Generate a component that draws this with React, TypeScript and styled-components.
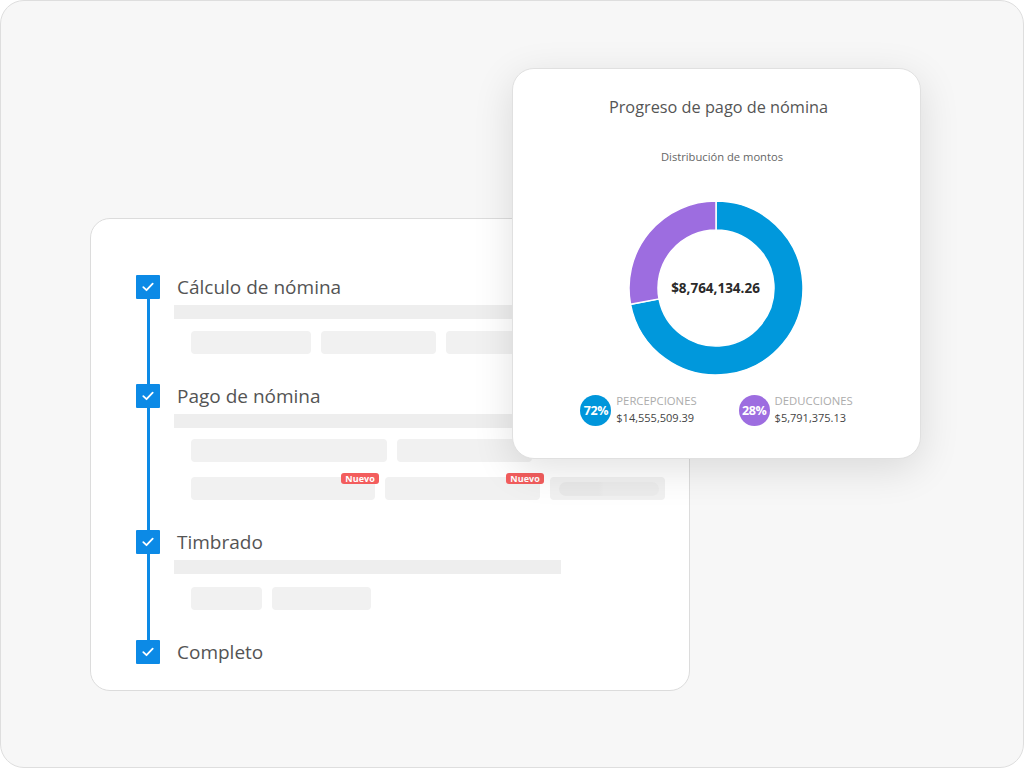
import React from "react";
import styled, { createGlobalStyle } from "styled-components";

const Global = createGlobalStyle`
  html, body { margin: 0; padding: 0; background: #ffffff; }
  body { font-family: "Open Sans", "Noto Sans", sans-serif; }
  * { box-sizing: border-box; }
`;

const BLUE = "#0c8ae6";

const Frame = styled.div`
  position: relative;
  width: 1024px;
  height: 768px;
  background: #f7f7f7;
  border: 1px solid #dedede;
  border-radius: 24px;
  padding: 217px 0 0 89px;
  overflow: hidden;
`;

const StepsCard = styled.div`
  width: 600px;
  height: 473px;
  background: #ffffff;
  border: 1px solid #dcdcdc;
  border-radius: 20px;
  padding: 56px 0 0 45px;
  display: flex;
  flex-direction: column;
`;

const Step = styled.div`
  display: flex;
  gap: 14px;
`;

const Rail = styled.div`
  width: 24px;
  display: flex;
  flex-direction: column;
  align-items: center;
`;

const Check = styled.div`
  width: 24px;
  height: 24px;
  background: ${BLUE};
  border-radius: 1px;
  display: flex;
  align-items: center;
  justify-content: center;
  flex-shrink: 0;
`;

const Line = styled.div`
  width: 3px;
  flex: 1;
  background: ${BLUE};
`;

const StepBody = styled.div<{ $last?: boolean }>`
  flex: 1;
  padding-bottom: ${(p) => (p.$last ? 0 : 30)}px;
`;

const StepTitle = styled.div`
  height: 24px;
  line-height: 25px;
  font-size: 19px;
  font-weight: 500;
  color: #545454;
  padding-left: 3px;
`;

const Bar = styled.div<{ $w: number }>`
  width: ${(p) => p.$w}px;
  height: 14px;
  margin-top: 6px;
  background: #eeeeee;
`;

const PillRow = styled.div<{ $mt: number }>`
  display: flex;
  gap: 10px;
  margin: ${(p) => p.$mt}px 0 0 17px;
`;

const Pill = styled.div<{ $w: number }>`
  position: relative;
  width: ${(p) => p.$w}px;
  height: 23px;
  border-radius: 4px;
  background: #f1f1f1;
  display: flex;
  align-items: center;
  padding-left: 9px;
  flex-shrink: 0;
`;

const InnerPill = styled.div`
  width: 100px;
  height: 14px;
  border-radius: 8px;
  background: linear-gradient(90deg, #e9e9e9 0%, #e9e9e9 40%, #ececec 45%, #ececec 100%);
`;

const Badge = styled.span`
  position: absolute;
  right: -4px;
  top: -4px;
  height: 11px;
  padding: 0 4px;
  border-radius: 3px;
  background: #f35d5d;
  color: #ffffff;
  font-size: 9px;
  font-weight: 700;
  line-height: 11px;
  letter-spacing: 0.1px;
`;

const ChartCard = styled.div`
  position: absolute;
  left: 511px;
  top: 67px;
  width: 409px;
  height: 391px;
  background: #ffffff;
  border: 1px solid #e0e0e0;
  border-radius: 22px;
  box-shadow: 0 10px 40px rgba(0, 0, 0, 0.12);
  display: flex;
  flex-direction: column;
  align-items: center;
  padding-top: 27px;
`;

const ChartTitle = styled.div`
  font-size: 16.3px;
  font-weight: 500;
  line-height: 22px;
  color: #555555;
  margin-left: 4px;
`;

const ChartSub = styled.div`
  margin: 31px 0 0 11px;
  font-size: 11.2px;
  line-height: 16px;
  color: #666666;
`;

const DonutWrap = styled.div`
  position: relative;
  margin-top: 36px;
  width: 174px;
  height: 174px;
  margin-left: -2px;
`;

const DonutLabel = styled.div`
  position: absolute;
  inset: 0;
  display: flex;
  align-items: center;
  justify-content: center;
  font-size: 13.5px;
  font-weight: 700;
  color: #2a2a2a;
`;

const Legend = styled.div`
  margin-top: 18px;
  display: flex;
  gap: 42px;
  margin-left: 0px;
`;

const LegendItem = styled.div`
  display: flex;
  align-items: center;
  gap: 5px;
`;

const Dot = styled.div<{ $c: string }>`
  width: 31px;
  height: 31px;
  border-radius: 50%;
  background: ${(p) => p.$c};
  color: #ffffff;
  font-size: 12.5px;
  font-weight: 700;
  display: flex;
  align-items: center;
  justify-content: center;
  letter-spacing: -0.4px;
`;

const LegendText = styled.div`
  display: flex;
  flex-direction: column;
`;

const LegendLabel = styled.div`
  font-size: 11.3px;
  line-height: 15px;
  color: #acacac;
`;

const LegendValue = styled.div`
  font-size: 11px;
  line-height: 19px;
  color: #444444;
`;

const CheckIcon = () => (
  <svg width="12" height="10" viewBox="0 0 12 10">
    <polyline points="1.3,5.2 4.5,8.2 10.7,1.6" fill="none" stroke="#fff" strokeWidth="1.8" strokeLinecap="round" strokeLinejoin="round" />
  </svg>
);

function arc(cx: number, cy: number, rO: number, rI: number, a0: number, a1: number) {
  const p = (r: number, a: number) => {
    const rad = ((a - 90) * Math.PI) / 180;
    return [cx + r * Math.cos(rad), cy + r * Math.sin(rad)];
  };
  const large = a1 - a0 > 180 ? 1 : 0;
  const [x0, y0] = p(rO, a0);
  const [x1, y1] = p(rO, a1);
  const [x2, y2] = p(rI, a1);
  const [x3, y3] = p(rI, a0);
  return `M${x0} ${y0} A${rO} ${rO} 0 ${large} 1 ${x1} ${y1} L${x2} ${y2} A${rI} ${rI} 0 ${large} 0 ${x3} ${y3} Z`;
}

const Donut = () => {
  const split = 0.72 * 360;
  return (
    <svg width="174" height="174" viewBox="0 0 174 174">
      <path d={arc(87, 87, 87, 58, 0, split)} fill="#0098dc" stroke="#fff" strokeWidth="1.5" />
      <path d={arc(87, 87, 87, 58, split, 360)} fill="#9d6de0" stroke="#fff" strokeWidth="1.5" />
    </svg>
  );
};

type StepData = {
  title: string;
  bar: number;
  rows: { mt: number; pills: { w: number; badge?: boolean; inner?: boolean }[] }[];
};

const steps: StepData[] = [
  {
    title: "Cálculo de nómina",
    bar: 480,
    rows: [{ mt: 12, pills: [{ w: 120 }, { w: 115 }, { w: 120 }] }],
  },
  {
    title: "Pago de nómina",
    bar: 480,
    rows: [
      { mt: 11, pills: [{ w: 196 }, { w: 135 }] },
      { mt: 15, pills: [{ w: 184, badge: true }, { w: 155, badge: true }, { w: 115, inner: true }] },
    ],
  },
  {
    title: "Timbrado",
    bar: 387,
    rows: [{ mt: 13, pills: [{ w: 71 }, { w: 99 }] }],
  },
  { title: "Completo", bar: 0, rows: [] },
];

export default function App() {
  return (
    <>
      <Global />
      <Frame>
        <StepsCard>
          {steps.map((s, i) => {
            const last = i === steps.length - 1;
            return (
              <Step key={s.title}>
                <Rail>
                  <Check>
                    <CheckIcon />
                  </Check>
                  {!last && <Line />}
                </Rail>
                <StepBody $last={last}>
                  <StepTitle>{s.title}</StepTitle>
                  {s.bar > 0 && <Bar $w={s.bar} />}
                  {s.rows.map((r, j) => (
                    <PillRow key={j} $mt={r.mt}>
                      {r.pills.map((p, k) => (
                        <Pill key={k} $w={p.w}>
                          {p.inner && <InnerPill />}
                          {p.badge && <Badge>Nuevo</Badge>}
                        </Pill>
                      ))}
                    </PillRow>
                  ))}
                </StepBody>
              </Step>
            );
          })}
        </StepsCard>
        <ChartCard>
          <ChartTitle>Progreso de pago de nómina</ChartTitle>
          <ChartSub>Distribución de montos</ChartSub>
          <DonutWrap>
            <Donut />
            <DonutLabel>$8,764,134.26</DonutLabel>
          </DonutWrap>
          <Legend>
            <LegendItem>
              <Dot $c="#0096db">72%</Dot>
              <LegendText>
                <LegendLabel>PERCEPCIONES</LegendLabel>
                <LegendValue>$14,555,509.39</LegendValue>
              </LegendText>
            </LegendItem>
            <LegendItem>
              <Dot $c="#9d6de0">28%</Dot>
              <LegendText>
                <LegendLabel>DEDUCCIONES</LegendLabel>
                <LegendValue>$5,791,375.13</LegendValue>
              </LegendText>
            </LegendItem>
          </Legend>
        </ChartCard>
      </Frame>
    </>
  );
}
